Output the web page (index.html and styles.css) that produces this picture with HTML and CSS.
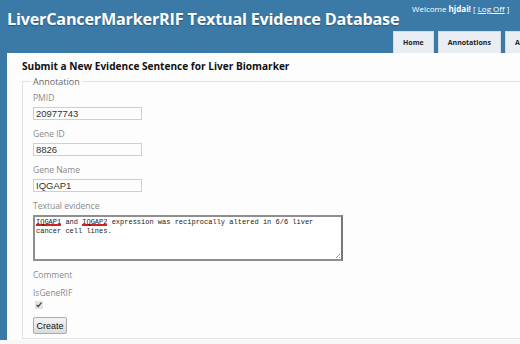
FILE: index.html
```html
<!DOCTYPE html>
<html lang="en">

<head>
    <meta charset="utf-8">
    <title>Create Evidence</title>
    <link rel="stylesheet" href="styles.css">
</head>

<body>
    <div class="page">
        <div class="header">
            <div class="title">LiverCancerMarkerRIF Textual Evidence Database</div>
            <div class="header-right">
                <div class="logindisplay">
                    Welcome <strong>hjdai!</strong> [ <a href="#">Log Off</a> ]
                </div>
                <div class="menu">
                    <a href="#">Home</a>
                    <a href="#">Annotations</a>
                    <a href="#">About</a>
                </div>
            </div>
        </div>

        <div class="main">
            <h2>Submit a New Evidence Sentence for Liver Biomarker</h2>
            <form>
                <fieldset>
                    <legend>Annotation</legend>

                    <div class="editor-label first">PMID</div>
                    <div class="editor-field"><input type="text" value="20977743"></div>

                    <div class="editor-label">Gene ID</div>
                    <div class="editor-field"><input type="text" value="8826"></div>

                    <div class="editor-label">Gene Name</div>
                    <div class="editor-field"><input type="text" value="IQGAP1"></div>

                    <div class="editor-label">Textual evidence</div>
                    <div class="editor-field">
                        <div class="textarea"><span class="typo">IQGAP1</span> and <span class="typo">IQGAP2</span> expression was reciprocally altered in 6/6 liver cancer cell lines.<span class="grip"></span></div>
                    </div>

                    <div class="editor-label">Comment</div>

                    <div class="editor-label">IsGeneRIF</div>
                    <div class="editor-field"><input type="checkbox" checked></div>

                    <div class="editor-field"><button type="button">Create</button></div>
                </fieldset>
            </form>
        </div>
    </div>
</body>

</html>
```

FILE: styles.css
```css
body {
    margin: 0;
    padding: 0;
    background-color: #f7f7f7;
    font-family: "Open Sans", sans-serif;
    overflow: hidden;
}

.page {
    background-color: #3b7aa6;
    padding-left: 7px;
    width: 560px;
}

.header {
    display: flex;
    height: 53px;
}

.title {
    flex-shrink: 0;
    width: 386px;
    color: #ffffff;
    font-weight: bold;
    font-size: 16.2px;
    line-height: 20px;
    padding-top: 9px;
    letter-spacing: -0.2px;
    white-space: nowrap;
    text-shadow: 0 1px 1px rgba(0, 0, 0, 0.3);
}

.header-right {
    display: flex;
    flex-direction: column;
    justify-content: space-between;
    align-items: flex-start;
}

.logindisplay {
    color: #ffffff;
    font-size: 8px;
    padding: 3px 0 0 19px;
    white-space: nowrap;
}

.logindisplay a {
    color: #ffffff;
}

.menu {
    display: flex;
    gap: 4px;
}

.menu a {
    display: block;
    background-color: #e8eef4;
    border: 1px solid #d3dde7;
    border-bottom: none;
    color: #222222;
    font-size: 7px;
    font-weight: bold;
    text-decoration: none;
    line-height: 21px;
    padding: 0 9px;
}

.main {
    background-color: #fdfdfd;
    height: 281px;
    padding: 6px 0 0 15px;
}

.main h2 {
    margin: 0 0 2px 0;
    font-size: 10.1px;
    line-height: 15px;
    color: #111111;
}

fieldset {
    margin: 0;
    border: 1px solid #e2e2e2;
    padding: 0 0 0 10px;
    height: 261px;
}

legend {
    color: #666666;
    font-size: 9px;
    line-height: 11px;
    padding: 0 2px;
    margin-left: -2px;
}

.editor-label {
    color: #8a8a8a;
    font-size: 8.5px;
    line-height: 9px;
    margin: 9px 0 5px 0;
}

.editor-label.first {
    margin-top: 6px;
}

.editor-field {
    display: flex;
}

.editor-field input[type="text"] {
    box-sizing: border-box;
    width: 109px;
    height: 13px;
    margin: 0;
    border: 1px solid #cfcfcf;
    padding: 0 2px;
    font-family: "Liberation Sans", Arial, sans-serif;
    font-size: 9.5px;
    color: #333333;
    background: #fdfdfd;
}

.textarea {
    position: relative;
    box-sizing: border-box;
    width: 310px;
    height: 46px;
    border: 2px solid #8e8e8e;
    border-right-color: #777777;
    padding: 1px 1px;
    font-family: "Liberation Mono", monospace;
    font-size: 7px;
    line-height: 9px;
    color: #222222;
    background: #ffffff;
}

.typo {
    background-image:
        linear-gradient(45deg, transparent 35%, #d02020 35%, #d02020 65%, transparent 65%),
        linear-gradient(-45deg, transparent 35%, #d02020 35%, #d02020 65%, transparent 65%);
    background-size: 3px 2px;
    background-repeat: repeat-x;
    background-position: 0 100%;
}

.grip {
    position: absolute;
    right: 1px;
    bottom: 1px;
    width: 5px;
    height: 5px;
    background: linear-gradient(135deg, transparent 55%, #9a9a9a 55%, #9a9a9a 65%, transparent 65%, transparent 80%, #9a9a9a 80%);
}

.editor-field input[type="checkbox"] {
    width: 8px;
    height: 8px;
    margin: -1px 0 0 2px;
    accent-color: #e4e4e4;
}

button {
    margin-top: 8px;
    width: 34px;
    height: 17px;
    padding: 0;
    font-family: "Liberation Sans", Arial, sans-serif;
    font-size: 9px;
    color: #111111;
    background: linear-gradient(#f4f4f4, #dcdcdc);
    border: 1px solid #acacac;
    border-radius: 2px;
}
```
